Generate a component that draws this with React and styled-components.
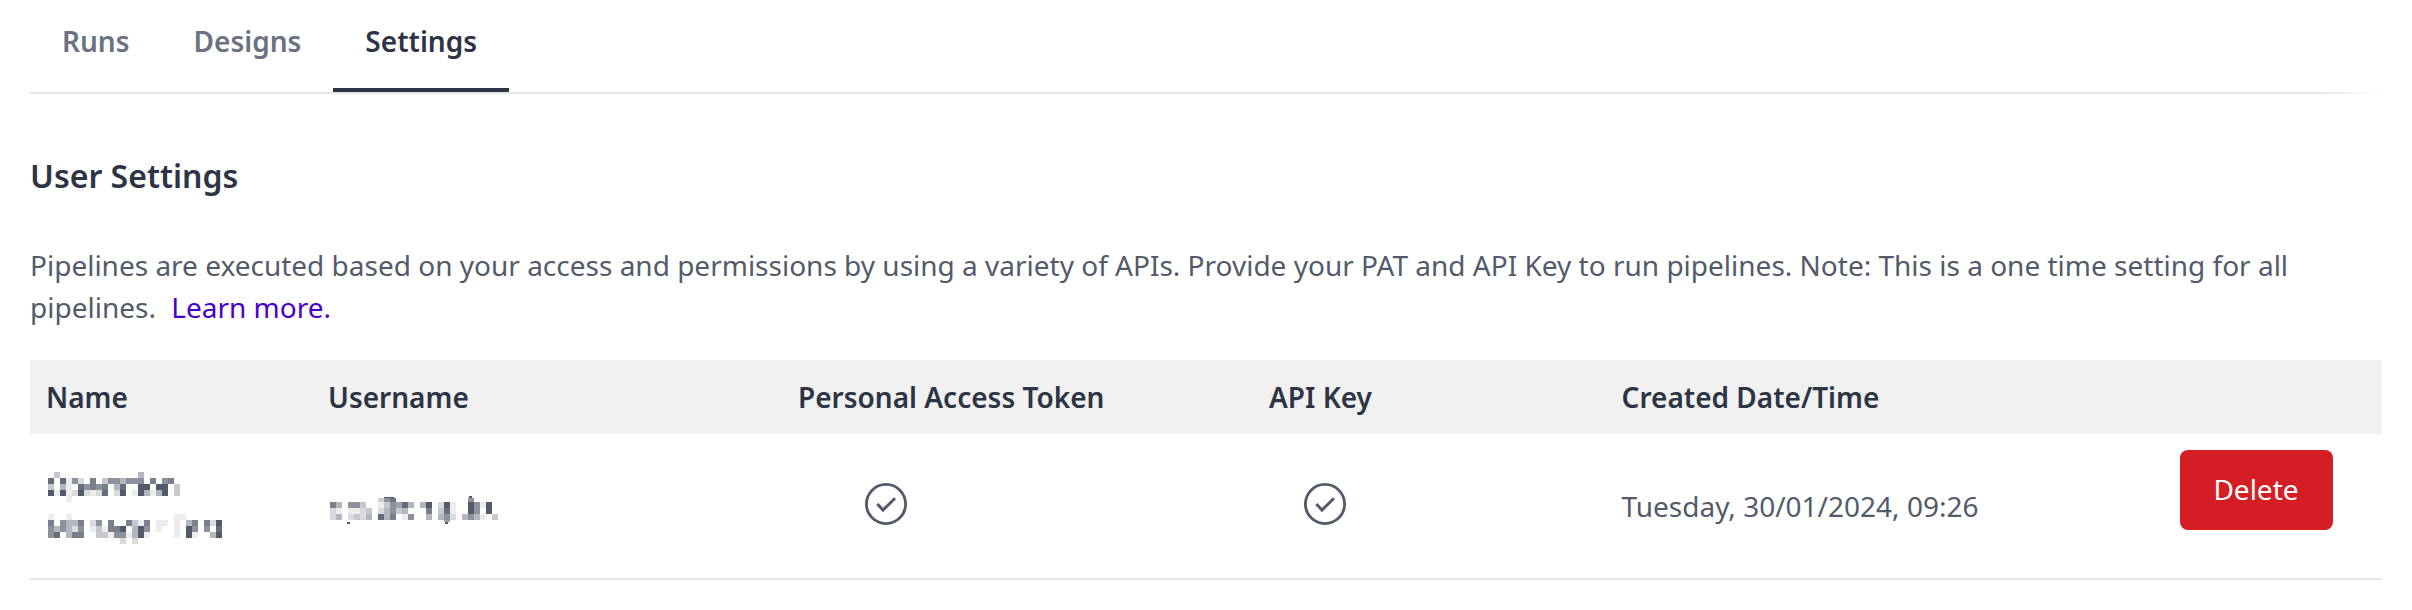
import React from 'react';
import styled, { createGlobalStyle } from 'styled-components';

const GlobalStyle = createGlobalStyle`
  *, *::before, *::after { box-sizing: border-box; }
  body {
    margin: 0;
    background: #fff;
    color: #535b6a;
    font: 400 28px/42px "Noto Sans", sans-serif;
  }
  svg { display: block; }
`;

const Page = styled.main`
  padding: 0 30px;
  height: 610px;
  overflow: hidden;
`;

const TabBar = styled.nav`
  display: flex;
  height: 94px;
  border-bottom: 2px solid;
  border-image: linear-gradient(to right, #e6e6e6 calc(100% - 64px), #fff 100%) 1;
`;

const Tab = styled.a`
  height: 92px;
  padding: 20px 32px 0;
  font-weight: 600;
  color: ${(p) => (p.$active ? '#2d3443' : '#6b7280')};
  border-bottom: 4px solid ${(p) => (p.$active ? '#2d3446' : 'transparent')};
`;

const Title = styled.h1`
  margin: 59px 0 0;
  font-size: 32px;
  line-height: 46px;
  font-weight: 600;
  color: #2d3443;
`;

const Intro = styled.p`
  margin: 45px 0 0;
`;

const LearnMore = styled.a`
  display: inline-block;
  margin-left: 8px;
  color: #4800d0;
`;

const Grid = styled.div`
  display: grid;
  grid-template-columns: 282px 470px 471px 352.6px 558.4px 1fr;
`;

const HeaderRow = styled(Grid)`
  margin-top: 32px;
  height: 74px;
  align-items: center;
  background: #f1f1f1;
  font-weight: 600;
  color: #2d3443;
`;

const BodyRow = styled(Grid)`
  height: 146px;
  align-items: center;
  border-bottom: 2px solid #e6e6e6;
`;

const Cell = styled.div`
  padding: 0 16px;
`;

const RedactedCell = styled(Cell)`
  padding: ${(p) => p.$top}px 0 0 18px;
`;

const CheckCell = styled(Cell)`
  padding: 0 0 4px ${(p) => p.$indent}px;
`;

const DeleteButton = styled.button`
  align-self: start;
  width: 153px;
  height: 80px;
  margin: 16px 0 0 16px;
  padding: 0 1px 2px 0;
  border: 0;
  border-radius: 8px;
  background: #d41e23;
  color: #fff;
  font: inherit;
`;

// Each digit is the darkness of one 6px block; a dot is an empty block.
const NAME_BLOCKS = [
  '.3.............4..............',
  '8.8162.7.3664666.7.67.........',
  '3.41.86767.48..99.99.3........',
  '9191292128.29.194149.3........',
  '...1..........................',
  '..............................',
  '..............................',
  '1..1.................11.......',
  '7.6447.26.7..7317.11.1.47.729.',
  '646426.131779.496.1..1.96.6.8.',
  '68.477..331661491....1.91..49.',
  '............2.2...............',
];
const USER_BLOCKS = [
  '74.663..136584.49.291..9619.',
  '21.1123.24634...7.381..96.9.',
  '24.2324.847.16..4.462.4641.3',
];

function Mosaic({ rows, width, height, top = 0, children }) {
  return (
    <svg width={width} height={height} shapeRendering="crispEdges" aria-hidden="true">
      {rows.flatMap((row, y) =>
        [...row].map((level, x) =>
          level === '.' ? null : (
            <rect key={`${x}-${y}`} x={x * 6} y={top + y * 6} width="6" height="6" fill="#535b6a" fillOpacity={level / 9} />
          )
        )
      )}
      {children}
    </svg>
  );
}

function CheckCircle() {
  return (
    <svg width="44" height="44" viewBox="0 0 44 44" fill="none" stroke="#535b6a">
      <circle cx="22" cy="22" r="19.6" strokeWidth="2.8" />
      <path d="M13.3 22 19 28 31 16.3" strokeWidth="3" />
    </svg>
  );
}

export default function App() {
  return (
    <Page>
      <GlobalStyle />
      <TabBar>
        <Tab>Runs</Tab>
        <Tab>Designs</Tab>
        <Tab $active>Settings</Tab>
      </TabBar>
      <Title>User Settings</Title>
      <Intro>
        Pipelines are executed based on your access and permissions by using a variety of APIs. Provide your PAT and API Key to run pipelines. Note: This is a one time setting for all pipelines. <LearnMore>Learn more.</LearnMore>
      </Intro>
      <HeaderRow>
        <Cell>Name</Cell>
        <Cell>Username</Cell>
        <Cell>Personal Access Token</Cell>
        <Cell>API Key</Cell>
        <Cell>Created Date/Time</Cell>
      </HeaderRow>
      <BodyRow>
        <RedactedCell $top={4}>
          <Mosaic rows={NAME_BLOCKS} width={180} height={72} />
        </RedactedCell>
        <RedactedCell $top={8}>
          <Mosaic rows={USER_BLOCKS} width={168} height={28} top={6}>
            <g fill="#535b6a">
              <rect x="48" y="2" width="6" height="4" fillOpacity="0.3" />
              <rect x="54" y="2" width="6" height="4" fillOpacity="0.65" />
              <rect x="60" y="2" width="6" height="4" fillOpacity="0.85" />
              <ellipse cx="59" cy="1.5" rx="5" ry="1" />
              <rect x="138" y="2" width="6" height="4" fillOpacity="0.65" />
              <rect x="139" y="0" width="3" height="2" />
              <rect x="114" y="24" width="6" height="2" fillOpacity="0.6" />
              <rect x="17" y="26" width="3" height="2" />
              <rect x="115" y="26" width="3" height="2" />
            </g>
          </Mosaic>
        </RedactedCell>
        <CheckCell $indent={82}>
          <CheckCircle />
        </CheckCell>
        <CheckCell $indent={50}>
          <CheckCircle />
        </CheckCell>
        <Cell>Tuesday, 30/01/2024, 09:26</Cell>
        <DeleteButton>Delete</DeleteButton>
      </BodyRow>
    </Page>
  );
}
